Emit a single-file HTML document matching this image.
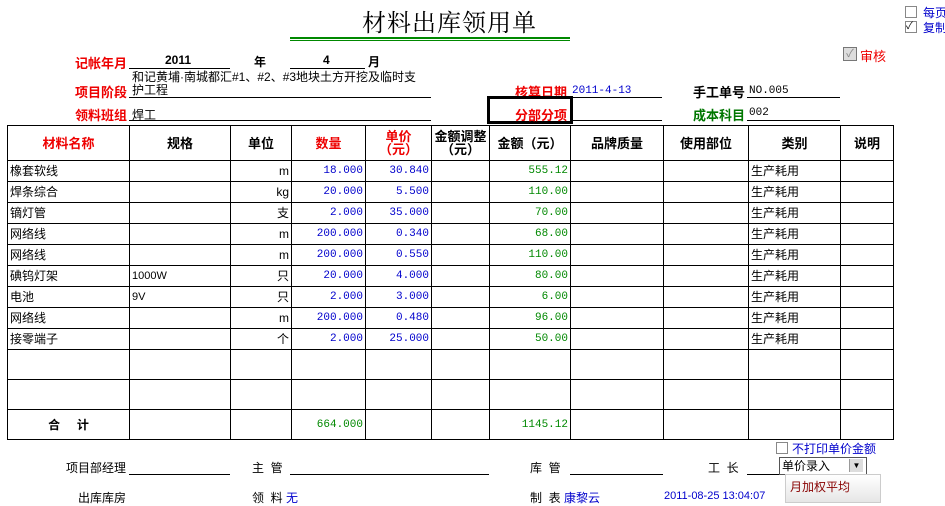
<!DOCTYPE html>
<html><head><meta charset="utf-8"><style>
body{margin:0;width:945px;height:501px;background:#fff;position:relative;overflow:hidden;font-family:"Liberation Sans","Noto Sans CJK SC",sans-serif;font-size:12px;color:#000}
.a{position:absolute;white-space:nowrap}
.r{color:#e00;font-weight:bold;font-size:13px}
.g{color:#070;font-weight:bold;font-size:13px}
.ln{position:absolute;height:1px;background:#000}
table{position:absolute;left:7px;top:125px;border-collapse:collapse;table-layout:fixed}
td{border:1px solid #000;padding:0 2px;height:20px;line-height:20px;vertical-align:middle;font-size:12px;overflow:hidden;white-space:nowrap;box-sizing:border-box}
th{border:1px solid #000;height:35px;font-size:13px;line-height:13px;box-sizing:border-box}
.n{text-align:right;color:#00c;font-family:"Liberation Mono",monospace;font-size:11px}
.m{text-align:right;color:#080;font-family:"Liberation Mono",monospace;font-size:11px}
.u{text-align:right}
.rr{color:#e00}
tr.d td{height:21px}
tr.e td{height:30px}
</style></head><body>
<div class="a" style="left:362px;top:3px;font-size:24px;font-family:'Liberation Serif','Noto Serif CJK SC',serif;letter-spacing:1px">材料出库领用单</div>
<div class="ln" style="left:290px;top:37px;width:280px;background:#080;height:2px"></div>
<div class="ln" style="left:290px;top:40px;width:280px;background:#080"></div>
<div class="a" style="left:905px;top:6px;width:10px;height:10px;border:1px solid #888"></div>
<div class="a" style="left:923px;top:4px;color:#00c">每页</div>
<div class="a" style="left:905px;top:21px;width:10px;height:10px;border:1px solid #888;font-size:10px;line-height:10px">✓</div>
<div class="a" style="left:923px;top:19px;color:#00c">复制</div>
<div class="a" style="left:843px;top:47px;width:12px;height:12px;border:1px solid #777;background:#ddd;font-size:11px;line-height:12px;color:#888;text-align:center">✓</div>
<div class="a" style="left:860px;top:46px;color:#e00;font-size:13px">审核</div>

<div class="a r" style="left:75px;top:53px">记帐年月</div>
<div class="a" style="left:165px;top:53px;font-weight:bold">2011</div>
<div class="ln" style="left:129px;top:68px;width:101px"></div>
<div class="a" style="left:254px;top:53px;font-weight:bold">年</div>
<div class="a" style="left:323px;top:53px;font-weight:bold">4</div>
<div class="ln" style="left:290px;top:68px;width:75px"></div>
<div class="a" style="left:368px;top:53px;font-weight:bold">月</div>
<div class="a r" style="left:75px;top:82px">项目阶段</div>
<div class="a" style="left:132px;top:71px;line-height:13px">和记黄埔·南城都汇#1、#2、#3地块土方开挖及临时支<br>护工程</div>
<div class="ln" style="left:129px;top:97px;width:302px"></div>
<div class="a r" style="left:75px;top:105px">领料班组</div>
<div class="a" style="left:132px;top:106px">焊工</div>
<div class="ln" style="left:129px;top:120px;width:302px"></div>
<div class="a r" style="left:515px;top:82px">核算日期</div>
<div class="a" style="left:572px;top:85px;color:#00c;font-family:'Liberation Mono',monospace;font-size:11px">2011-4-13</div>
<div class="ln" style="left:570px;top:97px;width:92px"></div>
<div class="a" style="left:487px;top:96px;width:80px;height:22px;border:3px solid #000"></div>
<div class="a r" style="left:515px;top:105px">分部分项</div>
<div class="ln" style="left:570px;top:120px;width:92px"></div>
<div class="a" style="left:693px;top:82px;font-weight:bold;font-size:13px">手工单号</div>
<div class="a" style="left:749px;top:85px;font-family:'Liberation Mono',monospace;font-size:11px">NO.005</div>
<div class="ln" style="left:747px;top:97px;width:93px"></div>
<div class="a g" style="left:693px;top:105px">成本科目</div>
<div class="a" style="left:749px;top:107px;font-family:'Liberation Mono',monospace;font-size:11px">002</div>
<div class="ln" style="left:747px;top:120px;width:93px"></div>

<table>
<colgroup><col style="width:122px"><col style="width:101px"><col style="width:61px"><col style="width:74px"><col style="width:66px"><col style="width:58px"><col style="width:81px"><col style="width:93px"><col style="width:85px"><col style="width:92px"><col style="width:53px"></colgroup>
<tr><th class="rr">材料名称</th><th>规格</th><th>单位</th><th class="rr">数量</th><th class="rr">单价<br>（元）</th><th>金额调整<br>（元）</th><th>金额（元）</th><th>品牌质量</th><th>使用部位</th><th>类别</th><th>说明</th></tr>
<tr class="d"><td>橡套软线</td><td></td><td class="u">m</td><td class="n">18.000</td><td class="n">30.840</td><td></td><td class="m">555.12</td><td></td><td></td><td>生产耗用</td><td></td></tr>
<tr class="d"><td>焊条综合</td><td></td><td class="u">kg</td><td class="n">20.000</td><td class="n">5.500</td><td></td><td class="m">110.00</td><td></td><td></td><td>生产耗用</td><td></td></tr>
<tr class="d"><td>镝灯管</td><td></td><td class="u">支</td><td class="n">2.000</td><td class="n">35.000</td><td></td><td class="m">70.00</td><td></td><td></td><td>生产耗用</td><td></td></tr>
<tr class="d"><td>网络线</td><td></td><td class="u">m</td><td class="n">200.000</td><td class="n">0.340</td><td></td><td class="m">68.00</td><td></td><td></td><td>生产耗用</td><td></td></tr>
<tr class="d"><td>网络线</td><td></td><td class="u">m</td><td class="n">200.000</td><td class="n">0.550</td><td></td><td class="m">110.00</td><td></td><td></td><td>生产耗用</td><td></td></tr>
<tr class="d"><td>碘钨灯架</td><td style="font-size:11px">1000W</td><td class="u">只</td><td class="n">20.000</td><td class="n">4.000</td><td></td><td class="m">80.00</td><td></td><td></td><td>生产耗用</td><td></td></tr>
<tr class="d"><td>电池</td><td style="font-size:11px">9V</td><td class="u">只</td><td class="n">2.000</td><td class="n">3.000</td><td></td><td class="m">6.00</td><td></td><td></td><td>生产耗用</td><td></td></tr>
<tr class="d"><td>网络线</td><td></td><td class="u">m</td><td class="n">200.000</td><td class="n">0.480</td><td></td><td class="m">96.00</td><td></td><td></td><td>生产耗用</td><td></td></tr>
<tr class="d"><td>接零端子</td><td></td><td class="u">个</td><td class="n">2.000</td><td class="n">25.000</td><td></td><td class="m">50.00</td><td></td><td></td><td>生产耗用</td><td></td></tr>
<tr class="e"><td></td><td></td><td></td><td></td><td></td><td></td><td></td><td></td><td></td><td></td><td></td></tr>
<tr class="e"><td></td><td></td><td></td><td></td><td></td><td></td><td></td><td></td><td></td><td></td><td></td></tr>
<tr class="e"><td style="text-align:center;font-weight:bold">合&nbsp;&nbsp;&nbsp;&nbsp;&nbsp;计</td><td></td><td></td><td class="m">664.000</td><td></td><td></td><td class="m">1145.12</td><td></td><td></td><td></td><td></td></tr>
</table>

<div class="a" style="left:776px;top:442px;width:10px;height:10px;border:1px solid #888"></div>
<div class="a" style="left:792px;top:440px;color:#00c">不打印单价金额</div>
<div class="a" style="left:66px;top:459px">项目部经理</div>
<div class="ln" style="left:129px;top:474px;width:101px"></div>
<div class="a" style="left:252px;top:459px">主&nbsp;&nbsp;管</div>
<div class="ln" style="left:290px;top:474px;width:199px"></div>
<div class="a" style="left:530px;top:459px">库&nbsp;&nbsp;管</div>
<div class="ln" style="left:570px;top:474px;width:93px"></div>
<div class="a" style="left:708px;top:459px">工&nbsp;&nbsp;长</div>
<div class="ln" style="left:747px;top:474px;width:35px"></div>
<div class="a" style="left:779px;top:457px;width:84px;height:16px;border:1px solid #555;background:#fff;line-height:16px;padding-left:2px">单价录入</div>
<div class="a" style="left:849px;top:459px;width:13px;height:13px;background:#ddd;border-left:1px solid #999;font-size:8px;line-height:13px;text-align:center">▼</div>
<div class="a" style="left:785px;top:474px;width:90px;height:27px;background:linear-gradient(#fff,#e6e6e6);border:1px solid #ccc;color:#800;line-height:24px;padding-left:4px">月加权平均</div>
<div class="a" style="left:78px;top:489px">出库库房</div>
<div class="a" style="left:252px;top:489px">领&nbsp;&nbsp;料 <span style="color:#00c">无</span></div>
<div class="a" style="left:530px;top:489px">制&nbsp;&nbsp;表 <span style="color:#00c">康黎云</span></div>
<div class="a" style="left:664px;top:490px;color:#00c;font-size:11px">2011-08-25 13:04:07</div>
</body></html>
